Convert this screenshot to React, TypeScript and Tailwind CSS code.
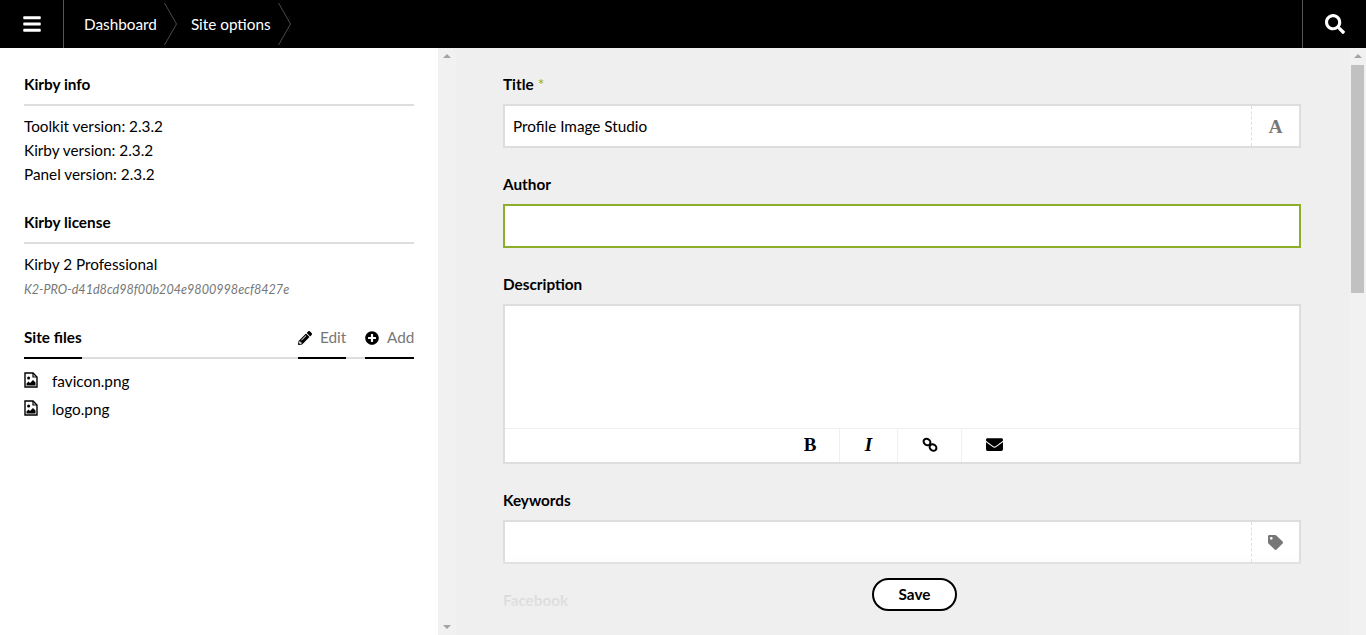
import { FaBars, FaSearch, FaPencilAlt, FaPlusCircle, FaEnvelope, FaTag } from "react-icons/fa";

const Crumb = ({ label }: { label: string }) => (
  <li className="flex h-12 items-center">
    <a href="#" className="text-white">{label}</a>
    <svg width="14" height="48" viewBox="0 0 14 48" fill="none" className="ml-[7px] mr-[13px]">
      <path d="M0.5 3 L12.5 24 L0.5 45" stroke="#4a4a4a" strokeWidth="1" />
    </svg>
  </li>
);

const SectionTitle = ({ children }: { children: string }) => (
  <h2 className="h-[37px] border-b-2 border-[#ddd] pt-[3px] font-bold leading-6 text-black">{children}</h2>
);

const Field = ({ label, required, children }: { label: string; required?: boolean; children: React.ReactNode }) => (
  <div className="mb-6">
    <label className="mb-2 block font-bold leading-6 text-black">
      {label}
      {required && <span className="ml-1 font-normal text-[#8dae28]">*</span>}
    </label>
    {children}
  </div>
);

const FileImageIcon = () => (
  <svg width="14" height="16" viewBox="0 0 14 16" className="mb-[2px] shrink-0">
    <path d="M1 1H9L13 5V15H1Z" fill="white" stroke="black" strokeWidth="1.4" />
    <path d="M9 1V5H13" fill="none" stroke="black" strokeWidth="1.2" />
    <circle cx="4.6" cy="6" r="1.5" fill="black" />
    <path d="M2.5 13.5V11.5L4.5 9.5L6 11L9 8L11.5 10.5V13.5Z" fill="black" />
  </svg>
);

export default function App() {
  return (
    <div className="flex h-screen flex-col overflow-hidden bg-[#efefef] font-['Lato','Liberation_Sans',sans-serif] text-[15.3px] leading-6 text-black">
      <header className="flex h-12 shrink-0 items-center bg-black">
        <button className="flex h-12 w-16 items-center justify-center border-r border-[#555] text-white">
          <FaBars size={20} />
        </button>
        <ul className="flex flex-1 pl-5">
          <Crumb label="Dashboard" />
          <Crumb label="Site options" />
        </ul>
        <button className="flex h-12 w-16 items-center justify-center border-l border-[#555] text-white">
          <FaSearch size={20} />
        </button>
      </header>

      <div className="relative flex min-h-0 flex-1">
        <aside className="w-[438px] shrink-0 bg-white px-6 pt-[21px]">
          <SectionTitle>Kirby info</SectionTitle>
          <div className="mt-2">
            <p>Toolkit version: 2.3.2</p>
            <p>Kirby version: 2.3.2</p>
            <p>Panel version: 2.3.2</p>
          </div>

          <div className="mt-[21px]">
            <SectionTitle>Kirby license</SectionTitle>
          </div>
          <p className="mt-2">Kirby 2 Professional</p>
          <p className="mt-[2px] text-[12.6px] italic text-[#777]">K2-PRO-d41d8cd98f00b204e9800998ecf8427e</p>

          <div className="mt-5 flex h-[37px] justify-between border-b-2 border-[#ddd]">
            <span className="h-[37px] border-b-2 border-black pt-[3px] font-bold">Site files</span>
            <div className="flex gap-[19px] text-[#777]">
              <span className="flex h-[37px] w-[48px] items-start gap-2 whitespace-nowrap border-b-2 border-black pt-[3px]">
                <FaPencilAlt size={14} className="mt-[6px] shrink-0 text-black" />
                Edit
              </span>
              <span className="flex h-[37px] w-[49px] items-start gap-2 whitespace-nowrap border-b-2 border-black pt-[3px]">
                <FaPlusCircle size={14} className="mt-[6px] shrink-0 text-black" />
                Add
              </span>
            </div>
          </div>
          <ul className="mt-2">
            {["favicon.png", "logo.png"].map((f) => (
              <li key={f} className="flex h-7 items-center">
                <FileImageIcon />
                <span className="ml-[14px]">{f}</span>
              </li>
            ))}
          </ul>
        </aside>

        <div className="flex w-[18px] shrink-0 flex-col items-center justify-between bg-[#f1f1f1] py-[6px]">
          <span className="border-x-[4px] border-b-[4px] border-x-transparent border-b-[#a3a3a3]" />
          <span className="border-x-[4px] border-t-[4px] border-x-transparent border-t-[#a3a3a3]" />
        </div>

        <main className="min-w-0 flex-1 overflow-hidden bg-[#efefef] pl-[47px] pr-[48px] pt-6">
          <Field label="Title" required>
            <div className="flex h-11 border-2 border-[#ddd] bg-white">
              <span className="flex-1 pl-2 leading-10">Profile Image Studio</span>
              <span className="flex w-[48px] items-center justify-center border-l border-dashed border-[#ddd] pt-[2px] font-['Liberation_Serif',serif] text-[19px] font-bold text-[#777]">A</span>
            </div>
          </Field>
          <Field label="Author">
            <div className="h-11 border-2 border-[#8dae28] bg-white" />
          </Field>
          <Field label="Description">
            <div className="h-[160px] border-2 border-[#ddd] bg-white">
              <div className="h-[122px]" />
              <div className="flex h-[34px] justify-center border-t border-[#efefef] pl-1 text-black">
                <span className="flex w-[59px] items-center justify-center border-r border-[#efefef] pb-[2px] font-['Liberation_Serif',serif] text-[19px] font-bold">B</span>
                <span className="flex w-[58px] items-center justify-center border-r border-[#efefef] pb-[2px] font-['Liberation_Serif',serif] text-[19px] font-bold italic">I</span>
                <span className="flex w-[64px] items-center justify-center border-r border-[#efefef] pb-[2px]">
                  <svg width="16" height="16" viewBox="0 0 16 16" fill="none" stroke="black" strokeWidth="2">
                    <ellipse cx="5" cy="5" rx="3.6" ry="3" transform="rotate(35 5 5)" />
                    <ellipse cx="11" cy="10.5" rx="3.6" ry="3" transform="rotate(35 11 10.5)" />
                  </svg>
                </span>
                <span className="flex w-[65px] items-center justify-center pb-[2px]">
                  <FaEnvelope size={17} />
                </span>
              </div>
            </div>
          </Field>
          <Field label="Keywords">
            <div className="flex h-11 border-2 border-[#ddd] bg-white">
              <span className="flex-1" />
              <span className="flex w-[48px] items-center justify-center border-l border-dashed border-[#ddd] text-[#777]">
                <FaTag size={15} />
              </span>
            </div>
          </Field>
          <Field label="Facebook">
            <div className="h-11 border-2 border-[#ddd] bg-white" />
          </Field>
        </main>

        <div className="flex w-[17px] shrink-0 flex-col items-center bg-[#f1f1f1]">
          <span className="mt-[6px] border-x-[4px] border-b-[4px] border-x-transparent border-b-[#a3a3a3]" />
          <div className="mt-[7px] h-[228px] w-[13px] bg-[#c1c1c1]" />
        </div>

        <div className="pointer-events-none absolute bottom-0 left-[456px] right-[17px] h-[80px] bg-gradient-to-b from-[#efefef00] via-[#efefefe6] via-45% to-[#efefef]" />
        <button className="absolute left-[872px] top-[530px] h-[33px] w-[85px] rounded-full border-2 border-black bg-white font-bold leading-none">
          Save
        </button>
      </div>
    </div>
  );
}
